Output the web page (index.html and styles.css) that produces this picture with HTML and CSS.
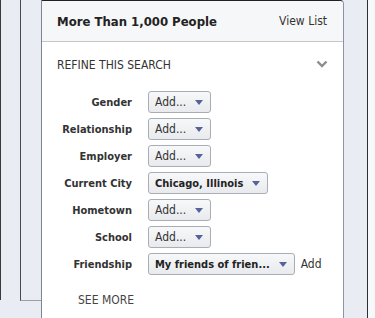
FILE: index.html
```html
<!DOCTYPE html>
<html>
<head>
    <meta charset="utf-8">
    <title>Refine This Search</title>
    <link rel="stylesheet" href="styles.css">
</head>
<body>
    <div class="page">
        <div class="rail-left">
            <div class="rail-strip"></div>
            <div class="rail-card"></div>
        </div>

        <div class="panel">
            <div class="panel-header">
                <span class="count">More Than 1,000 People</span>
                <a class="view-list">View List</a>
            </div>

            <div class="refine">
                <div class="refine-title">
                    <span>REFINE THIS SEARCH</span>
                    <svg class="chevron" width="12" height="8" viewBox="0 0 12 8">
                        <path d="M1.5 1.5 L6 6 L10.5 1.5" fill="none" stroke="#8a8d92" stroke-width="2.4"/>
                    </svg>
                </div>

                <div class="filters">
                    <div class="label">Gender</div>
                    <div class="cell"><span class="select">Add...<i class="arrow"></i></span></div>

                    <div class="label">Relationship</div>
                    <div class="cell"><span class="select">Add...<i class="arrow"></i></span></div>

                    <div class="label">Employer</div>
                    <div class="cell"><span class="select">Add...<i class="arrow"></i></span></div>

                    <div class="label">Current City</div>
                    <div class="cell"><span class="select picked">Chicago, Illinois<i class="arrow"></i></span></div>

                    <div class="label">Hometown</div>
                    <div class="cell"><span class="select">Add...<i class="arrow"></i></span></div>

                    <div class="label">School</div>
                    <div class="cell"><span class="select">Add...<i class="arrow"></i></span></div>

                    <div class="label">Friendship</div>
                    <div class="cell">
                        <span class="select picked">My friends of frien...<i class="arrow"></i></span>
                        <a class="add-link">Add</a>
                    </div>
                </div>

                <div class="see-more">SEE MORE</div>
            </div>
        </div>

        <div class="rail-right">
            <div class="rail-edge"></div>
        </div>
    </div>
</body>
</html>
```

FILE: styles.css
```css
body {
    margin: 0;
    background: #e9ecf2;
    font-family: "DejaVu Sans Condensed", "DejaVu Sans", sans-serif;
    color: #333;
    overflow: hidden;
}
a {
    cursor: pointer;
}
.page {
    display: flex;
    height: 318px;
}

/* background columns */
.rail-left {
    display: flex;
    width: 41px;
}
.rail-strip {
    width: 19px;
    height: 300px;
    border-left: 1px solid #3a3a3a;
}
.rail-card {
    width: 20px;
    height: 300px;
    border-left: 1px solid #4a4a4a;
    border-bottom: 1px solid #9aa0ab;
}
.rail-right {
    display: flex;
    width: 31px;
}
.rail-edge {
    margin-left: 23px;
    width: 8px;
    border-left: 1px solid #2e2e2e;
    background: #f7f8fa;
}

/* panel */
.panel {
    width: 301px;
    background: white;
    border-left: 1px solid #7f8591;
    border-right: 1px solid #8e949f;
    border-top: 1px solid #222;
    border-top-right-radius: 4px;
}
.panel-header {
    display: flex;
    align-items: center;
    justify-content: space-between;
    height: 40px;
    padding: 0 16px 0 15px;
    background: #f6f7f8;
    border-bottom: 1px solid #c3c6cc;
    border-top-right-radius: 4px;
}
.count {
    font-size: 13px;
    font-weight: bold;
    color: #222;
}
.view-list {
    font-size: 12px;
    color: #333;
}

.refine {
    padding: 16px 0 0 15px;
}
.refine-title {
    display: flex;
    align-items: center;
    justify-content: space-between;
    height: 14px;
    padding-right: 15px;
    font-size: 12px;
    color: #333;
}
.chevron {
    margin-top: -3px;
}

.filters {
    display: grid;
    grid-template-columns: 75px auto;
    column-gap: 16px;
    row-gap: 5px;
    margin-top: 19px;
}
.label {
    display: flex;
    align-items: center;
    justify-content: flex-end;
    height: 22px;
    font-size: 11px;
    font-weight: bold;
    color: #333;
    white-space: nowrap;
}
.cell {
    display: flex;
    align-items: center;
    gap: 6px;
}
.select {
    display: inline-flex;
    align-items: center;
    height: 20px;
    padding: 0 7px 0 6px;
    font-size: 12px;
    color: #333;
    background: linear-gradient(#f7f8f9, #e8eaed);
    border: 1px solid #a9adb5;
    border-radius: 3px;
    white-space: nowrap;
}
.select.picked {
    font-size: 11px;
    font-weight: bold;
    color: #222;
}
.arrow {
    width: 0;
    height: 0;
    margin-left: 9px;
    border-left: 4px solid transparent;
    border-right: 4px solid transparent;
    border-top: 5px solid #56639a;
}
.add-link {
    font-size: 12px;
    color: #333;
}
.see-more {
    margin: 18px 0 0 21px;
    font-size: 12px;
    color: #444;
}
```
